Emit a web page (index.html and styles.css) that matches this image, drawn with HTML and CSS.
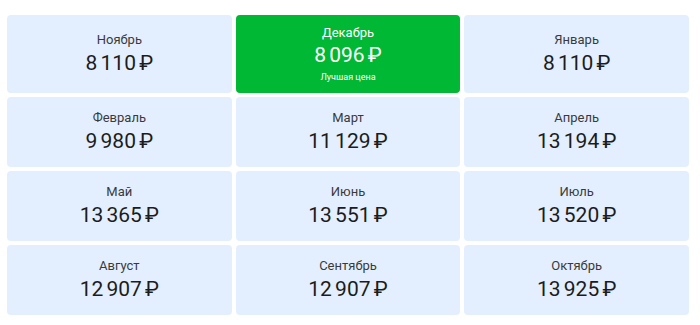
FILE: index.html
```html
<!DOCTYPE html>
<html lang="ru">
<head>
<meta charset="utf-8">
<link rel="stylesheet" href="styles.css">
</head>
<body>
<div class="calendar">
  <div class="cell"><div class="month">Ноябрь</div><div class="price">8 110 ₽</div></div>
  <div class="cell best"><div class="month">Декабрь</div><div class="price">8 096 ₽</div><div class="note">Лучшая цена</div></div>
  <div class="cell"><div class="month">Январь</div><div class="price">8 110 ₽</div></div>
  <div class="cell"><div class="month">Февраль</div><div class="price">9 980 ₽</div></div>
  <div class="cell"><div class="month">Март</div><div class="price">11 129 ₽</div></div>
  <div class="cell"><div class="month">Апрель</div><div class="price">13 194 ₽</div></div>
  <div class="cell"><div class="month">Май</div><div class="price">13 365 ₽</div></div>
  <div class="cell"><div class="month">Июнь</div><div class="price">13 551 ₽</div></div>
  <div class="cell"><div class="month">Июль</div><div class="price">13 520 ₽</div></div>
  <div class="cell"><div class="month">Август</div><div class="price">12 907 ₽</div></div>
  <div class="cell"><div class="month">Сентябрь</div><div class="price">12 907 ₽</div></div>
  <div class="cell"><div class="month">Октябрь</div><div class="price">13 925 ₽</div></div>
</div>
</body>
</html>
```
FILE: styles.css
```css
html, body {
  margin: 0;
  padding: 0;
  background: #ffffff;
}
body {
  padding: 15px 11px 10px 7px;
  font-family: Roboto, "Noto Sans", sans-serif;
  color: #1f1f1f;
}
.calendar {
  display: grid;
  grid-template-columns: 1fr 1fr 1fr;
  grid-template-rows: 78px 70px 70px 70px;
  gap: 4px;
}
.cell {
  background: #e3efff;
  border-radius: 4px;
  display: flex;
  flex-direction: column;
  align-items: center;
  justify-content: center;
}
.month {
  font-size: 13px;
  line-height: 16px;
  color: #3a3a3a;
}
.price {
  font-size: 21px;
  line-height: 26px;
  margin-top: 2px;
  color: #1c1c1c;
  word-spacing: -2px;
}
.best {
  background: #00b833;
}
.best .month,
.best .price,
.best .note {
  color: #ffffff;
}
.best .price {
  margin-top: 1px;
}
.note {
  font-size: 9px;
  line-height: 12px;
  margin-top: 3px;
}
```
